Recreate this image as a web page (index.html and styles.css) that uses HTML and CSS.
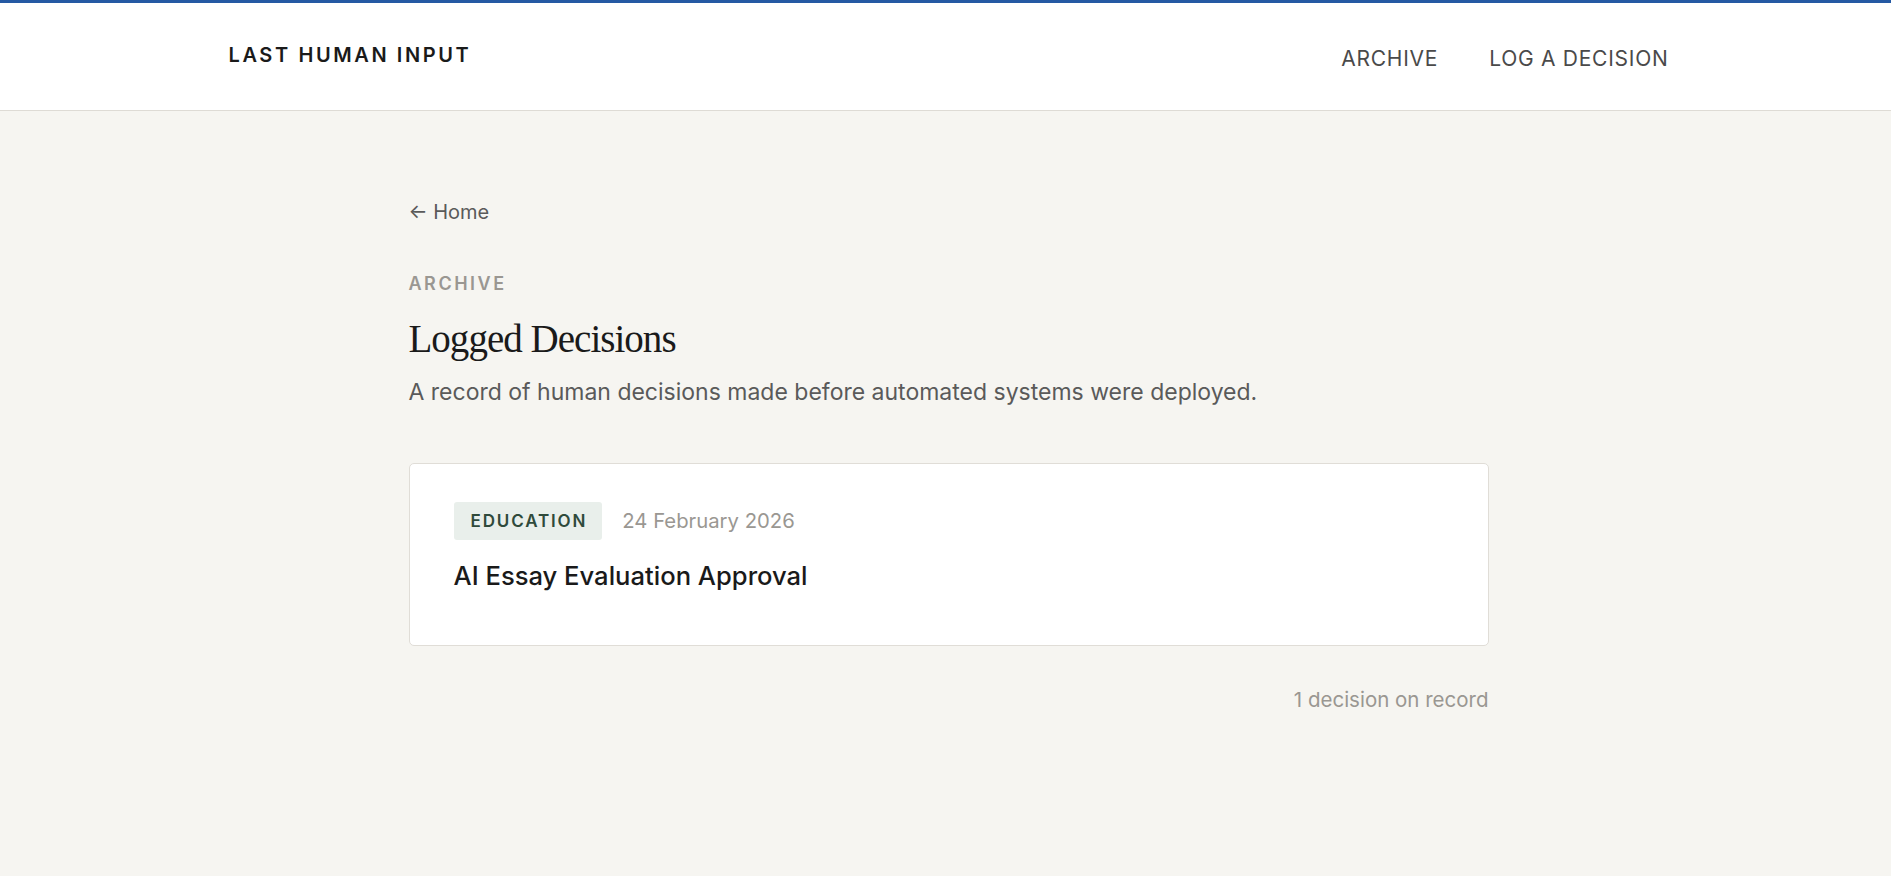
FILE: index.html
```html
<!DOCTYPE html>
<html lang="en">
<head>
<meta charset="utf-8">
<title>Archive — Last Human Input</title>
<link rel="stylesheet" href="styles.css">
</head>
<body>
<header class="site-header">
  <div class="header-inner">
    <a class="logo" href="#">LAST HUMAN INPUT</a>
    <nav class="nav">
      <a href="#">ARCHIVE</a>
      <a href="#">LOG A DECISION</a>
    </nav>
  </div>
</header>
<div class="page">
  <main class="main">
    <a class="back" href="#">← Home</a>
    <div class="eyebrow">ARCHIVE</div>
    <h1 class="title">Logged Decisions</h1>
    <p class="lead">A record of human decisions made before automated systems were deployed.</p>
    <article class="card">
      <div class="card-meta">
        <span class="badge">EDUCATION</span>
        <span class="date">24 February 2026</span>
      </div>
      <h2 class="card-title">AI Essay Evaluation Approval</h2>
    </article>
    <div class="count">1 decision on record</div>
  </main>
</div>
</body>
</html>
```
FILE: styles.css
```css
* { box-sizing: border-box; }
html, body { margin: 0; padding: 0; }
body {
  background: #f6f5f1;
  font-family: Inter, "Noto Sans", "Liberation Sans", sans-serif;
  color: #1a1a1a;
}
a { text-decoration: none; color: inherit; }

.site-header {
  background: #ffffff;
  border-top: 3px solid #2559a3;
  border-bottom: 1px solid #dedbd5;
  height: 111px;
  padding-left: 6px;
}
.header-inner {
  max-width: 1440px;
  margin: 0 auto;
  height: 100%;
  display: flex;
  align-items: center;
  justify-content: space-between;
}
.logo {
  font-size: 20px;
  line-height: 24px;
  font-weight: 600;
  letter-spacing: 0.13em;
  color: #1a1a1a;
  margin-top: -3px;
}
.nav {
  display: flex;
  gap: 51px;
  margin-top: 4px;
}
.nav a {
  font-size: 21px;
  line-height: 26px;
  letter-spacing: 0.035em;
  color: #4a4a4a;
}

.page {
  padding-left: 6px;
}
.main {
  max-width: 1080px;
  margin: 0 auto;
  padding: 89px 0 80px;
  display: flex;
  flex-direction: column;
}
.back {
  font-size: 20px;
  line-height: 24px;
  color: #5a5a5a;
  align-self: flex-start;
}
.eyebrow {
  margin-top: 49px;
  font-size: 18px;
  line-height: 22px;
  font-weight: 600;
  letter-spacing: 0.14em;
  color: #9a9792;
}
.title {
  margin: 20px 0 0;
  font-family: "Liberation Serif", "Times New Roman", serif;
  font-weight: 400;
  font-size: 39px;
  line-height: 48px;
  letter-spacing: -0.025em;
  color: #1a1a1a;
}
.lead {
  margin: 14px 0 0;
  font-size: 23px;
  line-height: 30px;
  color: #5a5a5a;
}
.card {
  margin-top: 56px;
  background: #ffffff;
  border: 1px solid #e0ddd7;
  border-radius: 5px;
  padding: 38px 44px 53px;
}
.card-meta {
  display: flex;
  align-items: center;
  gap: 20px;
}
.badge {
  background: #e9efeb;
  color: #2f4a3b;
  font-size: 17px;
  line-height: 22px;
  font-weight: 600;
  letter-spacing: 0.11em;
  padding: 8px 15px 8px 17px;
  border-radius: 3px;
}
.date {
  font-size: 20.3px;
  line-height: 24px;
  color: #9a9792;
}
.card-title {
  margin: 20px 0 0;
  font-size: 25.6px;
  line-height: 32px;
  font-weight: 500;
  color: #1a1a1a;
}
.count {
  margin-top: 42px;
  text-align: right;
  font-size: 20.5px;
  line-height: 24px;
  color: #9a9792;
}
```
